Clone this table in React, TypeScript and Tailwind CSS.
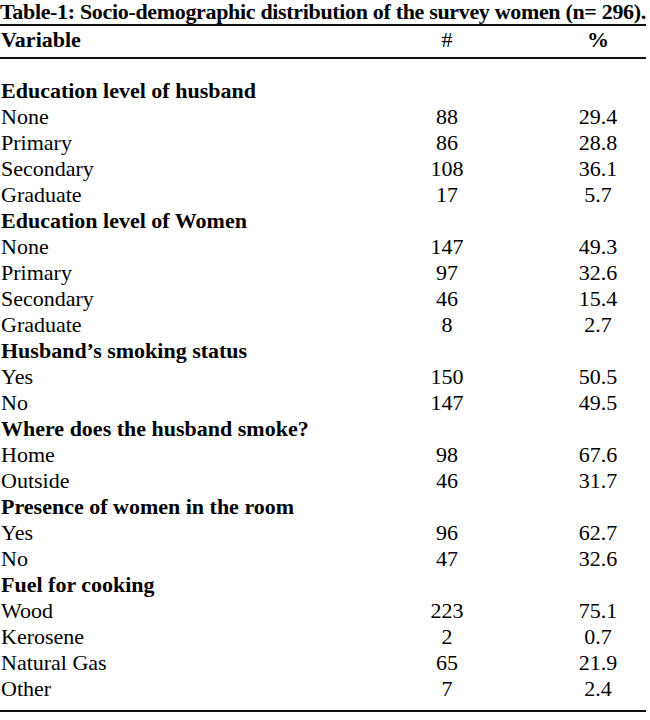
import React from "react";

type Row = { label: string; n?: string; p?: string; head?: boolean };

const rows: Row[] = [
  { label: "Education level of husband", head: true },
  { label: "None", n: "88", p: "29.4" },
  { label: "Primary", n: "86", p: "28.8" },
  { label: "Secondary", n: "108", p: "36.1" },
  { label: "Graduate", n: "17", p: "5.7" },
  { label: "Education level of Women", head: true },
  { label: "None", n: "147", p: "49.3" },
  { label: "Primary", n: "97", p: "32.6" },
  { label: "Secondary", n: "46", p: "15.4" },
  { label: "Graduate", n: "8", p: "2.7" },
  { label: "Husband\u2019s smoking status", head: true },
  { label: "Yes", n: "150", p: "50.5" },
  { label: "No", n: "147", p: "49.5" },
  { label: "Where does the husband smoke?", head: true },
  { label: "Home", n: "98", p: "67.6" },
  { label: "Outside", n: "46", p: "31.7" },
  { label: "Presence of women in the room", head: true },
  { label: "Yes", n: "96", p: "62.7" },
  { label: "No", n: "47", p: "32.6" },
  { label: "Fuel for cooking", head: true },
  { label: "Wood", n: "223", p: "75.1" },
  { label: "Kerosene", n: "2", p: "0.7" },
  { label: "Natural Gas", n: "65", p: "21.9" },
  { label: "Other", n: "7", p: "2.4" },
];

export default function App() {
  return (
    <div
      className="w-[650px] h-[720px] bg-white text-black text-[22px] overflow-hidden"
      style={{ fontFamily: '"Liberation Serif", "Times New Roman", serif' }}
    >
      <div className="h-[24px] leading-[24px] font-bold whitespace-nowrap tracking-[-0.33px]">
        Table-1: Socio-demographic distribution of the survey women (n= 296).
      </div>
      <div className="w-[646px] h-[2px] bg-[#111]" />
      <div className="grid grid-cols-[348px_198px_104px] h-[31px] pt-[1px] leading-[26px]">
        <div className="font-bold pl-[1px]">Variable</div>
        <div className="text-center">#</div>
        <div className="text-center font-bold">%</div>
      </div>
      <div className="w-[646px] h-[2px] bg-[#111]" />
      <div className="mt-[19px] mb-[8px]">
        {rows.map((r, i) => (
          <div
            key={i}
            className="grid grid-cols-[348px_198px_104px] h-[26px] leading-[26px] whitespace-nowrap"
          >
            <div className={r.head ? "font-bold pl-[1px]" : "pl-[1px]"}>{r.label}</div>
            <div className="text-center">{r.n ?? ""}</div>
            <div className="text-center">{r.p ?? ""}</div>
          </div>
        ))}
      </div>
      <div className="w-[646px] h-[2px] bg-[#111]" />
    </div>
  );
}
